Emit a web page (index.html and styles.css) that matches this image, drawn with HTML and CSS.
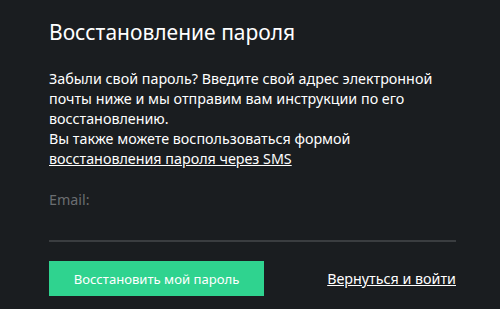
FILE: index.html
```html
<!DOCTYPE html>
<html lang="ru">
<head>
  <meta charset="UTF-8">
  <meta name="viewport" content="width=device-width, initial-scale=1">
  <title>Восстановление пароля</title>
  <link rel="stylesheet" href="styles.css">
</head>
<body>

<div class="reset">
  <h1>Восстановление пароля</h1>

  <p class="info">
    Забыли свой пароль? Введите свой адрес электронной почты ниже и мы отправим вам инструкции по его восстановлению.<br>
    Вы также можете воспользоваться формой <a href="#">восстановления пароля через SMS</a>
  </p>

  <!-- Email field -->
  <div class="field">
    <input type="email" class="field-input" placeholder="Email:">
  </div>

  <div class="actions">
    <button class="submit-btn">Восстановить мой пароль</button>
    <a href="#" class="back-link">Вернуться и войти</a>
  </div>
</div>

</body>
</html>
```

FILE: styles.css
```css
body {
  font-family: 'Noto Sans', sans-serif;
  margin: 0;
  background: #1a1d20;
  color: #fff;
}

.reset {
  width: 407px;
  margin-left: 49px;
  padding-top: 18px;
}

h1 {
  margin: 0;
  font-size: 21px;
  font-weight: 400;
  line-height: 29px;
}

.info {
  margin: 22px 0 0;
  font-size: 14.3px;
  line-height: 20px;
}

.info a {
  color: #fff;
}

.field {
  margin-top: 12px;
  border-bottom: 2px solid #3a3d40;
}

.field-input {
  display: block;
  width: 100%;
  height: 36px;
  padding: 0 0 23px;
  background: transparent;
  border: none;
  outline: none;
  color: #fff;
  font-family: inherit;
  font-size: 14.3px;
}

.field-input::placeholder {
  color: #6b6e71;
}

.actions {
  display: flex;
  justify-content: space-between;
  align-items: center;
  margin-top: 19px;
}

.submit-btn {
  width: 215px;
  height: 35px;
  background: #2fd38f;
  color: #fff;
  border: none;
  font-family: inherit;
  font-size: 13.1px;
  cursor: pointer;
}

.back-link {
  color: #fff;
  font-size: 14.3px;
}
```
